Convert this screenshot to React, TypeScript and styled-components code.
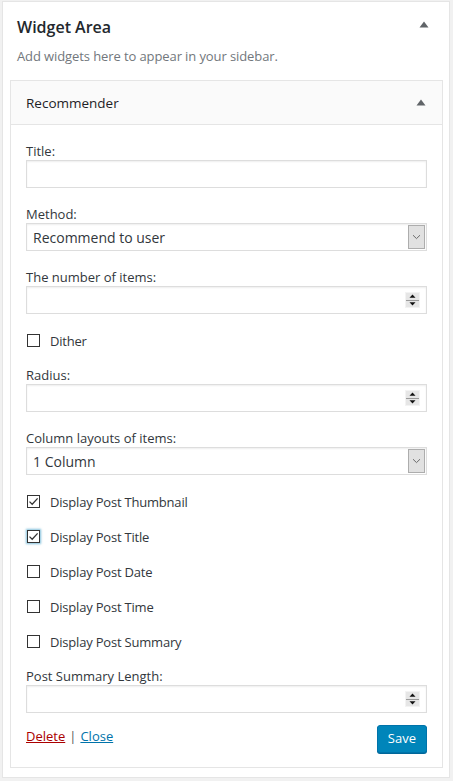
import React from 'react';
import styled, { createGlobalStyle } from 'styled-components';

const GlobalStyle = createGlobalStyle`
    html, body {
        margin: 0;
        padding: 0;
        background: #f1f1f1;
    }
    body {
        font-family: "Open Sans", "Noto Sans", Arial, sans-serif;
        font-size: 13px;
        color: #32373c;
    }
    * {
        box-sizing: border-box;
    }
`;

function Checkbox({ checked, focused }: { checked?: boolean; focused?: boolean }) {
    return (
        <Box focused={focused}>
            {checked && (
                <svg width="11" height="11" viewBox="0 0 11 11">
                    <path d="M1.5 5.6 L4.2 8.2 L9.6 2.4" fill="none" stroke="#333" strokeWidth="1.3" />
                </svg>
            )}
        </Box>
    );
}

function Select({ value }: { value: string }) {
    return (
        <SelectBox>
            <SelectValue>{value}</SelectValue>
            <DropButton>
                <svg width="9" height="6" viewBox="0 0 9 6">
                    <path d="M1 1.2 L4.5 4.6 L8 1.2" fill="none" stroke="#6b6b6b" strokeWidth="1" />
                </svg>
            </DropButton>
        </SelectBox>
    );
}

function NumberInput() {
    return (
        <NumberBox>
            <Spinner>
                <SpinHalf>
                    <svg width="7" height="4" viewBox="0 0 7 4">
                        <path d="M0.5 3.8 L3.5 0.4 L6.5 3.8 Z" fill="#111" />
                    </svg>
                </SpinHalf>
                <SpinHalf bottom>
                    <svg width="7" height="4" viewBox="0 0 7 4">
                        <path d="M0.5 0.2 L3.5 3.6 L6.5 0.2 Z" fill="#111" />
                    </svg>
                </SpinHalf>
            </Spinner>
        </NumberBox>
    );
}

function Toggle() {
    return (
        <svg width="10" height="7" viewBox="0 0 10 7">
            <path d="M0.5 6.5 L5 0.5 L9.5 6.5 Z" fill="#606468" />
        </svg>
    );
}

function App() {
    return (
        <>
            <GlobalStyle />
            <Sidebar>
                <SidebarHead>
                    <SidebarTitle>Widget Area</SidebarTitle>
                    <ToggleSlot top>
                        <Toggle />
                    </ToggleSlot>
                </SidebarHead>
                <Description>Add widgets here to appear in your sidebar.</Description>
                <Widget>
                    <WidgetHead>
                        <WidgetTitle>Recommender</WidgetTitle>
                        <ToggleSlot>
                            <Toggle />
                        </ToggleSlot>
                    </WidgetHead>
                    <WidgetBody>
                        <Field>
                            <Label>Title:</Label>
                            <TextInput />
                        </Field>
                        <Field>
                            <Label>Method:</Label>
                            <Select value="Recommend to user" />
                        </Field>
                        <Field>
                            <Label>The number of items:</Label>
                            <NumberInput />
                        </Field>
                        <CheckRow>
                            <Checkbox />
                            <CheckLabel>Dither</CheckLabel>
                        </CheckRow>
                        <Field>
                            <Label>Radius:</Label>
                            <NumberInput />
                        </Field>
                        <Field>
                            <Label>Column layouts of items:</Label>
                            <Select value="1 Column" />
                        </Field>
                        <CheckRow>
                            <Checkbox checked />
                            <CheckLabel>Display Post Thumbnail</CheckLabel>
                        </CheckRow>
                        <CheckRow>
                            <Checkbox checked focused />
                            <CheckLabel>Display Post Title</CheckLabel>
                        </CheckRow>
                        <CheckRow>
                            <Checkbox />
                            <CheckLabel>Display Post Date</CheckLabel>
                        </CheckRow>
                        <CheckRow>
                            <Checkbox />
                            <CheckLabel>Display Post Time</CheckLabel>
                        </CheckRow>
                        <CheckRow>
                            <Checkbox />
                            <CheckLabel>Display Post Summary</CheckLabel>
                        </CheckRow>
                        <Field>
                            <Label>Post Summary Length:</Label>
                            <NumberInput />
                        </Field>
                    </WidgetBody>
                    <WidgetFooter>
                        <Links>
                            <LinkText danger>Delete</LinkText>
                            <Separator>|</Separator>
                            <LinkText>Close</LinkText>
                        </Links>
                        <SaveButton>Save</SaveButton>
                    </WidgetFooter>
                </Widget>
            </Sidebar>
        </>
    );
}

const Sidebar = styled.div`
    width: 448px;
    margin: 1px 0 0 2px;
    padding: 0 6px 9px 7px;
    background: #fff;
    border: 1px solid #e5e5e5;
`;

const SidebarHead = styled.div`
    display: flex;
    justify-content: space-between;
    align-items: flex-start;
    padding: 14px 0 0 7px;
`;

const SidebarTitle = styled.h2`
    margin: 0;
    font-size: 16px;
    line-height: 22px;
    font-weight: 600;
    color: #23282d;
`;

const ToggleSlot = styled.span<{ top?: boolean }>`
    display: flex;
    padding: ${(p) => (p.top ? '5px 14px 0 0' : '0 16px 0 0')};
`;

const Description = styled.p`
    margin: 8px 0 0 7px;
    font-size: 13px;
    line-height: 20px;
    letter-spacing: -0.1px;
    color: #72777c;
`;

const Widget = styled.div`
    margin-top: 14px;
    border: 1px solid #e5e5e5;
    background: #fff;
`;

const WidgetHead = styled.div`
    display: flex;
    justify-content: space-between;
    align-items: center;
    height: 44px;
    padding: 0 0 0 15px;
    background: #fafafa;
    border-bottom: 1px solid #e5e5e5;
`;

const WidgetTitle = styled.h3`
    margin: 0;
    font-size: 13.5px;
    font-weight: 500;
    color: #1e2226;
`;

const WidgetBody = styled.div`
    display: flex;
    flex-direction: column;
    gap: 18px;
    padding: 18px 15px 0;
`;

const Field = styled.div`
    display: flex;
    flex-direction: column;
`;

const Label = styled.label`
    display: block;
    font-size: 13px;
    line-height: 17px;
    color: #32373c;
`;

const TextInput = styled.div`
    height: 28px;
    border: 1px solid #ddd;
    box-shadow: inset 0 1px 2px rgba(0, 0, 0, 0.07);
    background: #fff;
`;

const SelectBox = styled.div`
    display: flex;
    align-items: stretch;
    height: 28px;
    padding: 1px;
    border: 1px solid #ddd;
    box-shadow: inset 0 1px 2px rgba(0, 0, 0, 0.07);
    background: #fff;
`;

const SelectValue = styled.span`
    flex: 1;
    display: flex;
    align-items: center;
    padding-left: 5px;
    font-size: 14px;
    color: #32373c;
`;

const DropButton = styled.span`
    display: flex;
    align-items: center;
    justify-content: center;
    width: 17px;
    background: #e1e1e1;
    border: 1px solid #adadad;
`;

const NumberBox = styled.div`
    display: flex;
    justify-content: flex-end;
    align-items: center;
    height: 28px;
    padding-right: 6px;
    border: 1px solid #ddd;
    box-shadow: inset 0 1px 2px rgba(0, 0, 0, 0.07);
    background: #fff;
`;

const Spinner = styled.span`
    display: flex;
    flex-direction: column;
    width: 15px;
    height: 16px;
    background: #e6e6e6;
    border: 1px solid #f3f3f3;
`;

const SpinHalf = styled.span<{ bottom?: boolean }>`
    flex: 1;
    display: flex;
    align-items: center;
    justify-content: center;
    border-top: ${(p) => (p.bottom ? '1px solid #9a9a9a' : 'none')};
`;

const CheckRow = styled.div`
    display: flex;
    align-items: center;
    height: 17px;
    padding-left: 1px;
`;

const Box = styled.span<{ focused?: boolean }>`
    display: flex;
    align-items: center;
    justify-content: center;
    width: 13px;
    height: 13px;
    border: 1px solid #333;
    background: #fff;
    box-shadow: ${(p) => (p.focused ? '0 0 2px 1px rgba(30, 140, 190, 0.55)' : 'none')};
`;

const CheckLabel = styled.span`
    margin-left: 10px;
    font-size: 13px;
    letter-spacing: -0.2px;
    color: #32373c;
`;

const WidgetFooter = styled.div`
    display: flex;
    justify-content: space-between;
    align-items: flex-start;
    padding: 12px 15px 14px;
`;

const Links = styled.div`
    display: flex;
    gap: 4px;
    font-size: 13px;
    line-height: 22px;
`;

const LinkText = styled.a<{ danger?: boolean }>`
    color: ${(p) => (p.danger ? '#a00' : '#0073aa')};
    text-decoration: underline;
    cursor: pointer;
`;

const Separator = styled.span`
    color: #555;
`;

const SaveButton = styled.button`
    height: 28px;
    padding: 0 10px 2px;
    font-family: inherit;
    font-size: 13px;
    color: #fff;
    background: #0085ba;
    border: 1px solid #0073aa;
    border-radius: 3px;
    box-shadow: 0 1px 0 #006799;
    cursor: pointer;
`;

export default App;
